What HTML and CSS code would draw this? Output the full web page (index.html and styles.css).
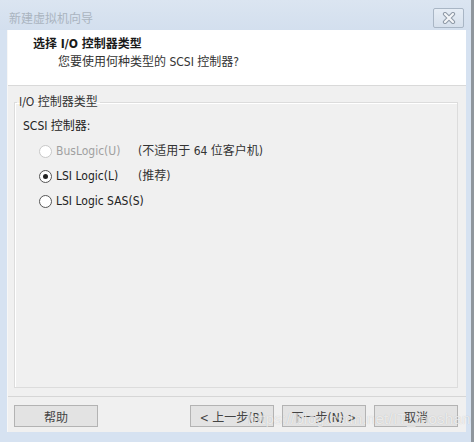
FILE: index.html
```html
<!DOCTYPE html>
<html lang="zh-CN">
<head>
    <meta charset="UTF-8">
    <meta name="viewport" content="width=device-width, initial-scale=1.0">
    <title>新建虚拟机向导</title>
    <link rel="stylesheet" href="styles.css">
</head>
<body>
    <div class="window">
        <div class="titlebar">
            <span class="title">新建虚拟机向导</span>
            <button class="close" type="button" aria-label="关闭">
                <svg width="14" height="12" viewBox="0 0 14 12">
                    <path d="M3 2 L11 10 M11 2 L3 10" stroke="#8e99a6" stroke-width="4.2" stroke-linecap="round"/>
                    <path d="M3 2 L11 10 M11 2 L3 10" stroke="#f4f6f9" stroke-width="2.2" stroke-linecap="round"/>
                </svg>
            </button>
        </div>

        <div class="client">
            <div class="header">
                <h1>选择 I/O 控制器类型</h1>
                <p>您要使用何种类型的 SCSI 控制器?</p>
            </div>

            <div class="body">
                <fieldset class="group">
                    <legend>I/O 控制器类型</legend>
                    <div class="group-label">SCSI 控制器:</div>
                    <div class="options">
                        <label class="option disabled">
                            <span class="radio"></span>
                            <span>BusLogic(U)</span>
                        </label>
                        <span class="note">(不适用于 64 位客户机)</span>

                        <label class="option">
                            <span class="radio checked"></span>
                            <span>LSI Logic(L)</span>
                        </label>
                        <span class="note">(推荐)</span>

                        <label class="option">
                            <span class="radio"></span>
                            <span>LSI Logic SAS(S)</span>
                        </label>
                        <span class="note"></span>
                    </div>
                </fieldset>
            </div>

            <div class="footer">
                <button class="btn" type="button">帮助</button>
                <div class="spacer"></div>
                <button class="btn" type="button">&lt; 上一步(B)</button>
                <button class="btn" type="button">下一步(N) &gt;</button>
                <button class="btn" type="button">取消</button>
            </div>
        </div>

        <div class="watermark">https://blog.csdn.net/IT_moshang</div>
    </div>
</body>
</html>
```

FILE: styles.css
```css
body {
    margin: 0;
    font-family: "DejaVu Sans Condensed", "Liberation Sans", "Noto Sans CJK SC", sans-serif;
    font-size: 12px;
    color: #222;
}

.window {
    position: relative;
    width: 474px;
    height: 442px;
    box-sizing: border-box;
    background: #d6e2f1;
    border-right: 3px solid #8f969d;
    display: flex;
    flex-direction: column;
    overflow: hidden;
}

.titlebar {
    height: 30px;
    display: flex;
    align-items: center;
    padding: 0 7px 0 9px;
    background: linear-gradient(#dbe5f1, #d3dfee);
}

.title {
    flex: 1;
    color: #aab4bf;
    font-family: "Noto Sans CJK SC", sans-serif;
    font-size: 12px;
    padding-top: 4px;
}

.close {
    width: 31px;
    height: 20px;
    margin-top: 5px;
    padding: 0;
    border: 1px solid #a9b6c5;
    border-radius: 2px;
    background: linear-gradient(#e6edf5, #d6e0ec);
    display: flex;
    align-items: center;
    justify-content: center;
}

.client {
    margin: 0 5px 0 7px;
    height: 402px;
    display: flex;
    flex-direction: column;
    background: #f0f0f0;
    border-left: 1px solid #f7f7f7;
}

.header {
    height: 56px;
    box-sizing: border-box;
    background: #fff;
    border-bottom: 1px solid #d9d9d9;
    padding: 6px 0 0 25px;
}

.header h1 {
    margin: 0;
    font-size: 12px;
    line-height: 16px;
    font-weight: bold;
    color: #1a1a1a;
}

.header p {
    margin: 2px 0 0 25px;
    line-height: 16px;
    color: #333;
}

.body {
    flex: 1;
    display: flex;
    flex-direction: column;
    padding: 9px 8px 8px 6px;
}

.group {
    flex: 1;
    margin: 0;
    padding: 0 8px;
    border: 1px solid #dcdcdc;
    box-shadow: inset 1px 1px 0 #fff;
}

.group legend {
    margin-left: -6px;
    padding: 0 2px;
    line-height: 14px;
    color: #333;
}

.group-label {
    margin-top: 9px;
    line-height: 16px;
    color: #222;
}

.options {
    display: grid;
    grid-template-columns: 99px auto;
    row-gap: 7px;
    margin-top: 8px;
    padding-left: 16px;
}

.option {
    display: flex;
    align-items: center;
    gap: 4px;
    height: 18px;
    color: #222;
    white-space: nowrap;
}

.option.disabled {
    color: #a0a0a0;
}

.note {
    height: 18px;
    line-height: 18px;
    color: #333;
    white-space: nowrap;
}

.radio {
    flex: none;
    width: 11px;
    height: 11px;
    border: 1px solid #555;
    border-radius: 50%;
    background: #fff;
    display: flex;
    align-items: center;
    justify-content: center;
}

.disabled .radio {
    border-color: #c8c8c8;
}

.radio.checked::after {
    content: "";
    width: 5px;
    height: 5px;
    border-radius: 50%;
    background: #222;
}

.footer {
    height: 36px;
    box-sizing: border-box;
    border-top: 1px solid #d6d6d6;
    display: flex;
    gap: 8px;
    padding: 8px 8px 0 6px;
}

.spacer {
    flex: 1;
}

.btn {
    width: 84px;
    height: 22px;
    padding: 0;
    border: 1px solid #b3b3b3;
    background: #e3e3e3;
    font-family: inherit;
    font-size: 12px;
    color: #444;
    white-space: nowrap;
}

.watermark {
    position: absolute;
    left: 248px;
    top: 410px;
    font-family: "Liberation Sans", sans-serif;
    font-size: 15px;
    letter-spacing: 0.3px;
    color: rgba(255, 255, 255, 0.7);
    text-shadow: 0 0 1px rgba(0, 0, 0, 0.2);
    white-space: nowrap;
}
```
